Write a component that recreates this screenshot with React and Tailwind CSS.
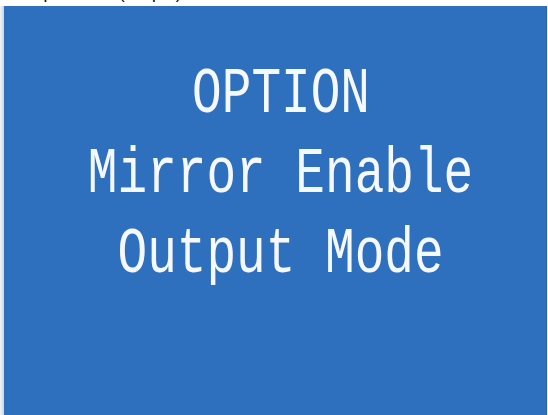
export default function App() {
  const lines = ["OPTION", "Mirror Enable", "Output Mode"];
  return (
    <div className="w-[548px] h-[415px] bg-white flex flex-col overflow-hidden">
      <div className="h-[6px] shrink-0 overflow-hidden bg-white">
        <div
          className="ml-[16px] -mt-[15px] text-[17px] leading-none text-black whitespace-nowrap"
          style={{ fontFamily: '"Liberation Sans", Arial, sans-serif' }}
        >
          Output Mode (Output)
        </div>
      </div>
      <div className="flex-1 flex">
        <div className="w-[4px] bg-gradient-to-r from-[#f2f4f7] to-[#c9d6e8]" />
        <div className="flex-1 bg-[#2f70be] border-r border-[#2a64aa] flex flex-col items-center pt-[49px] pl-[12px]">
          {lines.map((t) => (
            <div
              key={t}
              className="h-[80px] leading-[80px] text-[65px] text-[#f5f8ff] whitespace-pre scale-x-[0.76]"
              style={{ fontFamily: '"Liberation Mono", "Courier New", monospace' }}
            >
              {t}
            </div>
          ))}
        </div>
        <div className="w-[1px] bg-[#e9eef5]" />
      </div>
    </div>
  );
}
